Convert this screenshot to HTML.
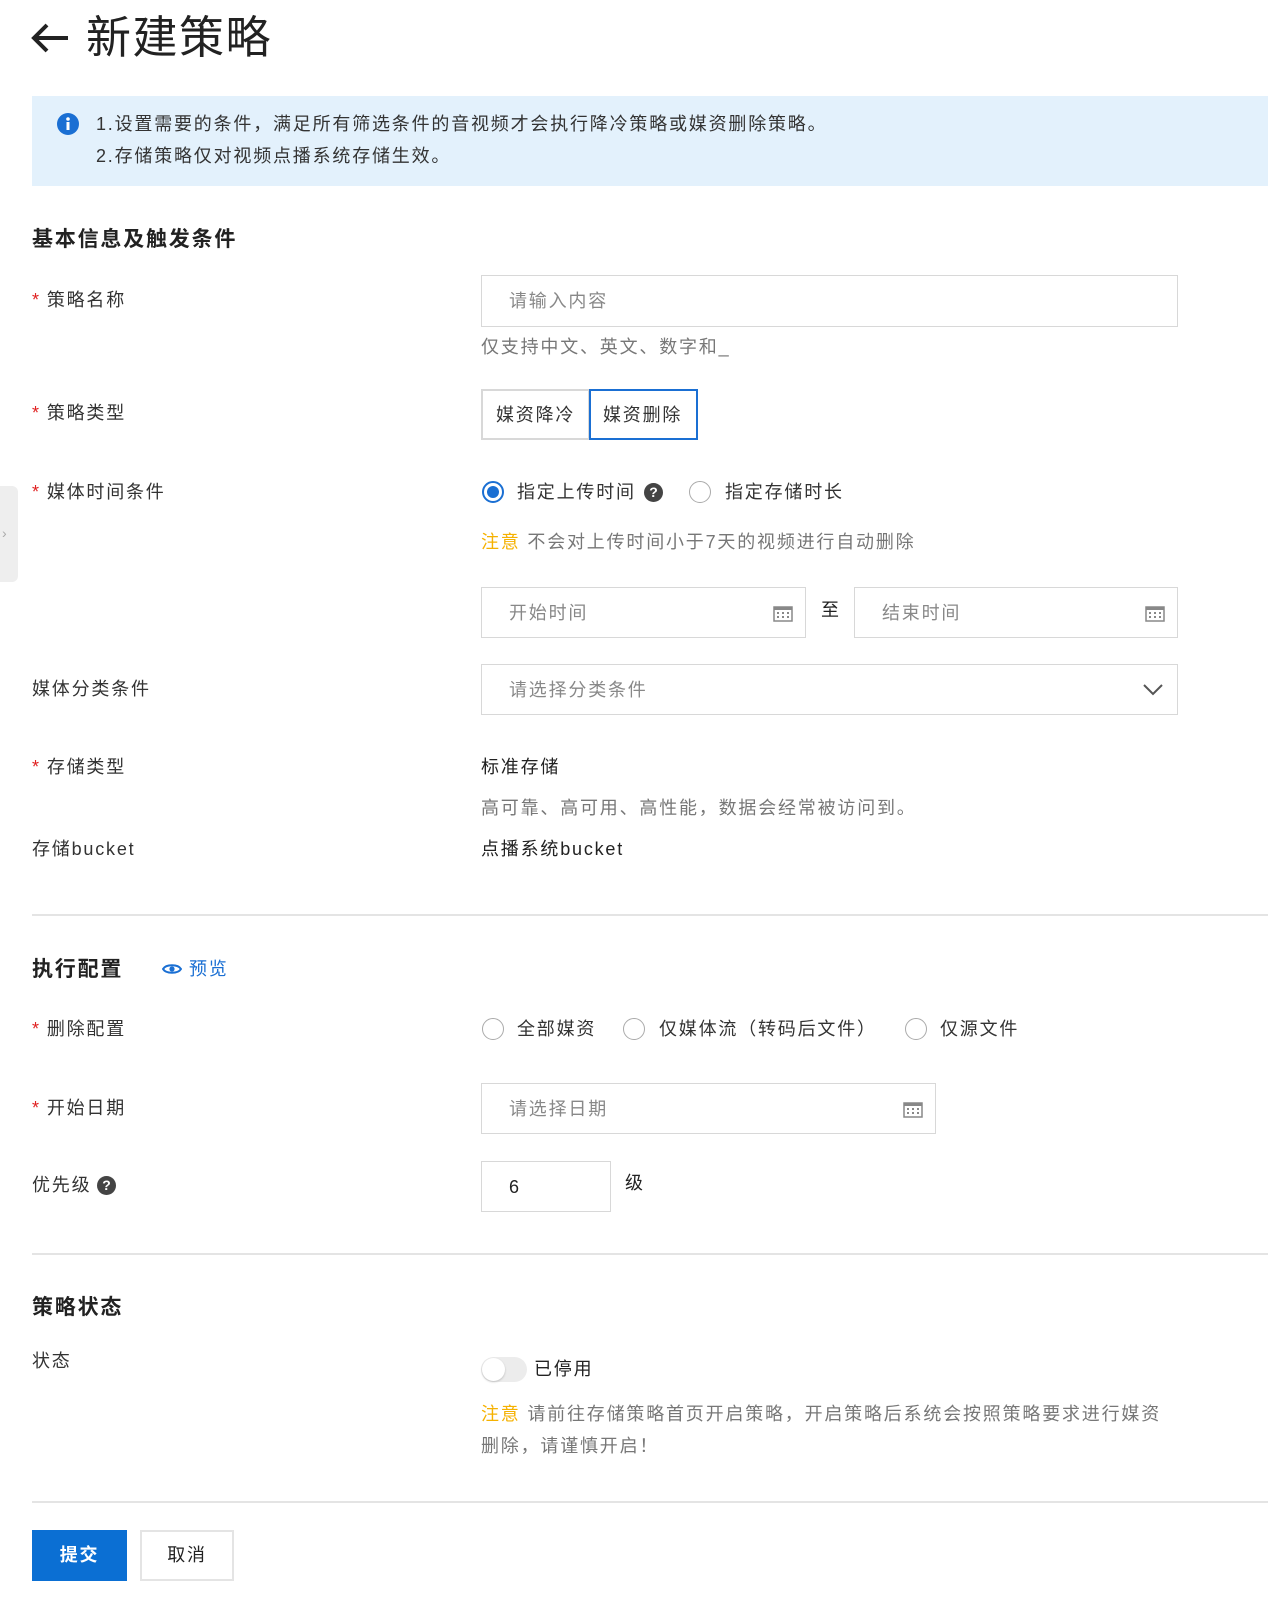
<!DOCTYPE html>
<html><head><meta charset="utf-8"><style>
*{margin:0;padding:0;box-sizing:border-box}
body{width:1268px;height:1598px;background:#fff;position:relative;overflow:hidden;font-family:"Liberation Sans","Noto Sans CJK SC",sans-serif;color:#333;font-size:18px;letter-spacing:1.8px}
.a{position:absolute;white-space:nowrap;line-height:1}
.lbl{position:absolute;left:32px;color:#333;font-size:18px;line-height:1;transform:translateY(-50%)}
.star{color:#e02020;margin-right:6px}
.inp{position:absolute;border:1px solid #d8d8d8;background:#fff}
.ph{position:absolute;left:27px;top:50%;transform:translateY(-50%);color:#888;font-size:18px;line-height:1}
.h{font-weight:bold;font-size:21px;color:#222}
.hr{position:absolute;left:32px;right:0;height:2px;background:#e4e4e4}
.rad{position:absolute;width:22px;height:22px;border:1.5px solid #aaa;border-radius:50%;background:#fff}
.gray{color:#777}
.cal{position:absolute;top:50%;transform:translateY(-50%)}
</style></head><body>
<div style="position:absolute;left:0;top:486px;width:18px;height:96px;background:#eee;border-radius:0 6px 6px 0"></div>
<div class="a" style="left:2px;top:526px;color:#aaa;font-size:14px">›</div>

<svg class="a" style="left:30px;top:22px" width="40" height="32" viewBox="0 0 40 32"><path d="M38 16H4M17 3L4 16l13 13" fill="none" stroke="#222" stroke-width="4"/></svg>
<div class="a" style="left:86px;top:15px;font-size:45px;color:#222;letter-spacing:1.5px">新建策略</div>

<div style="position:absolute;left:32px;top:96px;width:1236px;height:90px;background:#e3f1fc"></div>
<svg class="a" style="left:57px;top:113px" width="22" height="22"><circle cx="11" cy="11" r="11" fill="#1a6fd3"/><rect x="9.5" y="9" width="3" height="8" fill="#fff"/><circle cx="11" cy="6" r="1.8" fill="#fff"/></svg>
<div class="a" style="left:96px;top:115px;font-size:18px;color:#333">1.设置需要的条件，满足所有筛选条件的音视频才会执行降冷策略或媒资删除策略。</div>
<div class="a" style="left:96px;top:147px;font-size:18px;color:#333">2.存储策略仅对视频点播系统存储生效。</div>

<div class="a h" style="left:32px;top:229px">基本信息及触发条件</div>

<div class="lbl" style="top:300px"><span class="star">*</span>策略名称</div>
<div class="inp" style="left:481px;top:275px;width:697px;height:52px"><span class="ph">请输入内容</span></div>
<div class="a gray" style="left:481px;top:338px">仅支持中文、英文、数字和_</div>

<div class="lbl" style="top:413px"><span class="star">*</span>策略类型</div>
<div class="inp" style="left:481px;top:389px;width:109px;height:51px;border-width:2px"><span class="ph" style="left:13px;color:#333">媒资降冷</span></div>
<div class="inp" style="left:589px;top:389px;width:109px;height:51px;border:2px solid #1a6fd3"><span class="ph" style="left:12px;color:#333">媒资删除</span></div>

<div class="lbl" style="top:492px"><span class="star">*</span>媒体时间条件</div>
<div class="rad" style="left:482px;top:481px;border:2px solid #1a6fd3"></div>
<div class="a" style="left:487px;top:486px;width:12px;height:12px;border-radius:50%;background:#1a6fd3"></div>
<div class="a" style="left:517px;top:483px">指定上传时间</div>
<div class="a" style="left:644px;top:483px;width:19px;height:19px;border-radius:50%;background:#444;color:#fff;font-size:14px;font-weight:bold;text-align:center;line-height:19px;letter-spacing:0">?</div>
<div class="rad" style="left:689px;top:481px"></div>
<div class="a" style="left:725px;top:483px">指定存储时长</div>
<div class="a" style="left:481px;top:533px;color:#777"><span style="color:#f5b100">注意</span> 不会对上传时间小于7天的视频进行自动删除</div>

<div class="inp" style="left:481px;top:587px;width:325px;height:51px"><span class="ph">开始时间</span>
<svg class="cal" style="right:12px" width="20" height="18"><rect x="1" y="3" width="18" height="14" fill="none" stroke="#888" stroke-width="1.5"/><rect x="1" y="3" width="18" height="3" fill="#888"/><g fill="#888"><rect x="4" y="8" width="2" height="2"/><rect x="9" y="8" width="2" height="2"/><rect x="14" y="8" width="2" height="2"/><rect x="4" y="12" width="2" height="2"/><rect x="9" y="12" width="2" height="2"/><rect x="14" y="12" width="2" height="2"/></g></svg></div>
<div class="a" style="left:821px;top:601px;color:#222">至</div>
<div class="inp" style="left:854px;top:587px;width:324px;height:51px"><span class="ph">结束时间</span>
<svg class="cal" style="right:12px" width="20" height="18"><rect x="1" y="3" width="18" height="14" fill="none" stroke="#888" stroke-width="1.5"/><rect x="1" y="3" width="18" height="3" fill="#888"/><g fill="#888"><rect x="4" y="8" width="2" height="2"/><rect x="9" y="8" width="2" height="2"/><rect x="14" y="8" width="2" height="2"/><rect x="4" y="12" width="2" height="2"/><rect x="9" y="12" width="2" height="2"/><rect x="14" y="12" width="2" height="2"/></g></svg></div>

<div class="lbl" style="top:689px">媒体分类条件</div>
<div class="inp" style="left:481px;top:664px;width:697px;height:51px"><span class="ph">请选择分类条件</span>
<svg class="cal" style="right:14px" width="20" height="12"><path d="M1 1l9 9 9-9" fill="none" stroke="#555" stroke-width="2"/></svg></div>

<div class="lbl" style="top:767px"><span class="star">*</span>存储类型</div>
<div class="a" style="left:481px;top:758px;color:#222">标准存储</div>
<div class="a gray" style="left:481px;top:799px">高可靠、高可用、高性能，数据会经常被访问到。</div>
<div class="lbl" style="top:849px">存储bucket</div>
<div class="a" style="left:481px;top:840px;color:#222">点播系统bucket</div>

<div class="hr" style="top:914px"></div>

<div class="a h" style="left:32px;top:959px">执行配置</div>
<svg class="a" style="left:162px;top:962px" width="20" height="14"><path d="M1 7C4 2 16 2 19 7C16 12 4 12 1 7Z" fill="none" stroke="#1a6fd3" stroke-width="2"/><circle cx="10" cy="7" r="2.6" fill="#1a6fd3"/></svg>
<div class="a" style="left:189px;top:960px;color:#1a6fd3">预览</div>

<div class="lbl" style="top:1029px"><span class="star">*</span>删除配置</div>
<div class="rad" style="left:482px;top:1018px"></div><div class="a" style="left:517px;top:1020px">全部媒资</div>
<div class="rad" style="left:623px;top:1018px"></div><div class="a" style="left:659px;top:1020px">仅媒体流（转码后文件）</div>
<div class="rad" style="left:905px;top:1018px"></div><div class="a" style="left:940px;top:1020px">仅源文件</div>

<div class="lbl" style="top:1108px"><span class="star">*</span>开始日期</div>
<div class="inp" style="left:481px;top:1083px;width:455px;height:51px"><span class="ph">请选择日期</span>
<svg class="cal" style="right:12px" width="20" height="18"><rect x="1" y="3" width="18" height="14" fill="none" stroke="#888" stroke-width="1.5"/><rect x="1" y="3" width="18" height="3" fill="#888"/><g fill="#888"><rect x="4" y="8" width="2" height="2"/><rect x="9" y="8" width="2" height="2"/><rect x="14" y="8" width="2" height="2"/><rect x="4" y="12" width="2" height="2"/><rect x="9" y="12" width="2" height="2"/><rect x="14" y="12" width="2" height="2"/></g></svg></div>

<div class="lbl" style="top:1185px">优先级</div>
<div class="a" style="left:97px;top:1176px;width:19px;height:19px;border-radius:50%;background:#444;color:#fff;font-size:14px;font-weight:bold;text-align:center;line-height:19px;letter-spacing:0">?</div>
<div class="inp" style="left:481px;top:1161px;width:130px;height:51px"><span class="ph" style="color:#222">6</span></div>
<div class="a" style="left:625px;top:1174px;color:#222">级</div>

<div class="hr" style="top:1253px"></div>

<div class="a h" style="left:32px;top:1297px">策略状态</div>
<div class="lbl" style="top:1361px">状态</div>
<div class="a" style="left:481px;top:1357px;width:46px;height:25px;border-radius:13px;background:#ececec"></div>
<div class="a" style="left:482px;top:1358px;width:23px;height:23px;border-radius:50%;background:#fff;box-shadow:0 1px 2px rgba(0,0,0,.2)"></div>
<div class="a" style="left:534px;top:1360px;color:#222">已停用</div>
<div class="a" style="left:481px;top:1405px;color:#777"><span style="color:#f5b100">注意</span> 请前往存储策略首页开启策略，开启策略后系统会按照策略要求进行媒资</div>
<div class="a" style="left:481px;top:1437px;color:#777">删除，请谨慎开启！</div>

<div class="hr" style="top:1501px"></div>

<div class="a" style="left:32px;top:1530px;width:95px;height:51px;background:#0b6fd3;color:#fff;line-height:51px;text-align:center;font-weight:bold">提交</div>
<div class="a" style="left:140px;top:1530px;width:94px;height:51px;border:2px solid #e4e4e4;color:#222;line-height:47px;text-align:center">取消</div>
</body></html>
